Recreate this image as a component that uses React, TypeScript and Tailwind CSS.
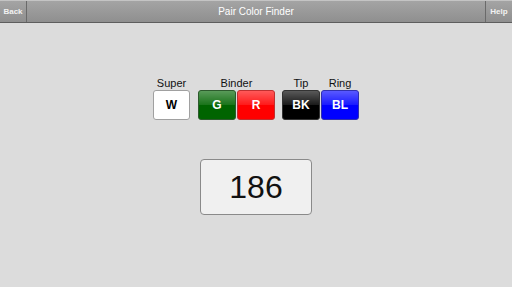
import React from 'react';

const font = { fontFamily: '"Liberation Sans", Arial, sans-serif' };

function Chip({ code, className, text = 'text-white' }: { code: string; className: string; text?: string }) {
  return (
    <div className={`relative w-[38px] h-[30px] rounded-[3px] border overflow-hidden flex items-center justify-center ${className}`}>
      <div className="absolute inset-x-0 top-0 h-1/2 bg-gradient-to-b from-white/35 to-white/10" />
      <span className={`relative text-[12px] font-bold ${text}`}>{code}</span>
    </div>
  );
}

export default function App() {
  return (
    <div className="w-[512px] h-[287px] bg-[#dcdcdc] flex flex-col" style={font}>
      <div className="h-[23px] flex bg-gradient-to-b from-[#a4a4a4] to-[#8f8f8f] border-t border-t-[#c4c4c4] border-b border-b-[#5e5e5e]">
        <div className="w-[27px] border-r border-[#6a6a6a] flex items-center justify-center text-[8px] font-bold text-[#f2f2f2]">Back</div>
        <div className="flex-1 flex items-center justify-center text-[10px] text-white">Pair Color Finder</div>
        <div className="w-[27px] border-l border-[#6a6a6a] flex items-center justify-center text-[8px] font-bold text-[#f2f2f2]">Help</div>
      </div>

      <div className="flex flex-col items-center pt-[53px]">
        <div className="flex items-end">
          <div className="flex flex-col items-center">
            <span className="text-[11px] leading-[14px] text-[#111]">Super</span>
            <div className="w-[37px] h-[30px] rounded-[3px] border border-[#a0a0a0] bg-white flex items-center justify-center text-[12px] font-bold text-black">W</div>
          </div>
          <div className="flex flex-col items-center ml-[8px]">
            <span className="text-[11px] leading-[14px] text-[#111]">Binder</span>
            <div className="flex gap-[1px]">
              <Chip code="G" className="bg-[#006400] border-[#2d5a2d]" />
              <Chip code="R" className="bg-[#ff0000] border-[#c03030]" />
            </div>
          </div>
          <div className="flex flex-col items-center ml-[7px]">
            <span className="text-[11px] leading-[14px] text-[#111]">Tip</span>
            <Chip code="BK" className="bg-black border-[#333]" />
          </div>
          <div className="flex flex-col items-center ml-[1px]">
            <span className="text-[11px] leading-[14px] text-[#111]">Ring</span>
            <Chip code="BL" className="bg-[#0000ff] border-[#3030b0]" />
          </div>
        </div>

        <div className="mt-[39px] w-[112px] h-[56px] rounded-[4px] border border-[#8a8a8a] bg-[#f0f0f0] flex items-center justify-center text-[32px] text-[#111]">
          186
        </div>
      </div>
    </div>
  );
}
